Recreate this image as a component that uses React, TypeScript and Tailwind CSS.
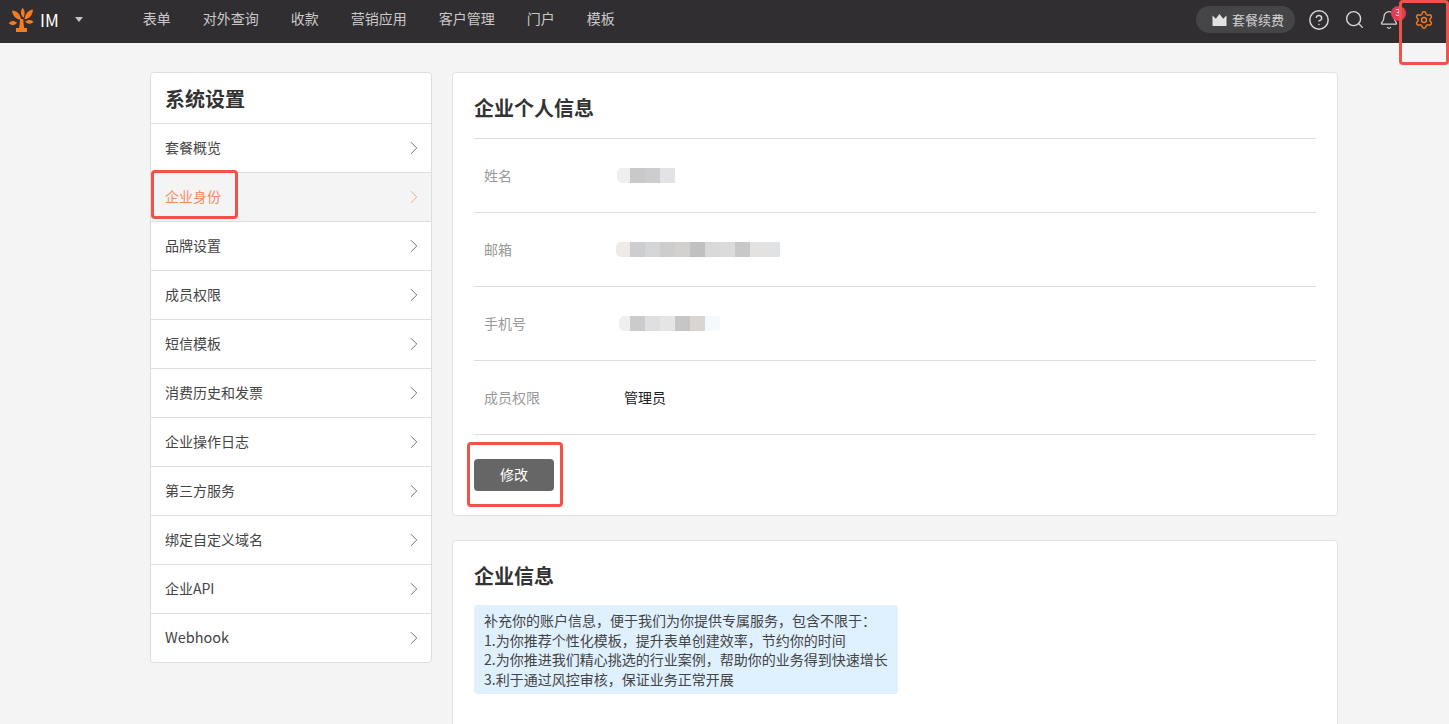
import { Bell, ChevronRight, CircleHelp, Search, Settings } from 'lucide-react';

const NAV = ['表单', '对外查询', '收款', '营销应用', '客户管理', '门户', '模板'];
const MENU = ['套餐概览', '企业身份', '品牌设置', '成员权限', '短信模板', '消费历史和发票', '企业操作日志', '第三方服务', '绑定自定义域名', '企业API', 'Webhook'];

function Logo() {
  return (
    <svg width="26" height="26" viewBox="0 0 26 26" fill="#f47b20">
      <path d="M14.500.800c2.400 2.600 3 6 1 10-2.800-2.400-3.400-6.200-1-10z" />
      <path d="M4 3.500c4.600.2 8 3 9.200 9.200-5-.2-8.400-3.400-9.200-9.200z" />
      <path d="M25 2.500c-4.600.6-7.600 3.600-8.600 9.800 5.200-.6 8.200-4.200 8.600-9.800z" />
      <path d="M.800 16.300c2-2.600 5.200-3 8.200-.6-2.200 2.900-5.400 3.200-8.200.6z" />
      <path d="M25.500 14.800c-2.400-2.400-5.400-2.400-8.400-.2 2.400 2.900 5.800 3 8.400.2z" />
      <path d="M12 12h3.200l.5 6 .6 3H19v4H8v-4h3l.6-3z" />
    </svg>
  );
}

function Crown() {
  return (
    <svg width="15" height="12" viewBox="0 0 15 12" fill="#e2e2e2">
      <path d="M.500 1.500l3.300 3.200L7.500 0l3.700 4.700 3.300-3.200V12H.500z" />
    </svg>
  );
}

// first cell is cut short on the left, the rest sit on a 15px grid
function Blur({ first, cells }: { first: number; cells: string[] }) {
  return (
    <div className="flex h-[15px]">
      {cells.map((c, i) => (
        <div
          key={i}
          className={i === 0 ? 'h-full rounded-l-[5px]' : 'h-full'}
          style={{ background: c, width: i === 0 ? first : 15 }}
        />
      ))}
    </div>
  );
}

function Row({ label, children }: { label: string; children: React.ReactNode }) {
  return (
    <div className="flex h-[74px] items-center border-b border-[#dedede] pl-2.5">
      <div className="w-[132px] pb-0.5 text-sm text-[#999]">{label}</div>
      {children}
    </div>
  );
}

export default function App() {
  return (
    <div className="relative h-[724px] overflow-hidden bg-[#f4f4f4] font-['Noto_Sans_CJK_SC','Noto_Sans',sans-serif] text-[#333]">
      <header className="flex h-[43px] items-center bg-[#302e31] pb-1">
        <div className="ml-2"><Logo /></div>
        <span className="ml-[6px] text-[17px] text-white">IM</span>
        <span className="ml-4 h-0 w-0 border-x-4 border-t-[5px] border-x-transparent border-t-[#c4c4c4]" />
        <nav className="ml-[60px] flex gap-8 pb-1">
          {NAV.map((n) => (
            <span key={n} className="text-sm text-[#c9c9c9]">{n}</span>
          ))}
        </nav>
        <div className="ml-auto flex h-[27px] w-[99px] items-center gap-[5px] rounded-full bg-[#454447] pl-4">
          <Crown />
          <span className="text-[13px] text-[#d2d2d2]">套餐续费</span>
        </div>
        <div className="ml-[6.500px] flex h-5 w-[35px] items-center justify-center">
          <CircleHelp className="text-[#d6d6d6]" size={22} strokeWidth={1.6} />
        </div>
        <div className="flex h-5 w-[35px] items-center justify-center">
          <Search className="text-[#d6d6d6]" size={21} strokeWidth={1.6} />
        </div>
        <div className="relative flex h-5 w-[35px] items-center justify-center">
          <Bell className="text-[#d6d6d6]" size={20} strokeWidth={1.5} />
          <span className="absolute left-[19px] -top-1 flex h-[15px] w-[15px] items-center justify-center rounded-full bg-[#e23b55] text-[9px] text-white">3</span>
        </div>
        <div className="mr-[7.500px] flex h-5 w-[35px] items-center justify-center">
          <Settings className="text-[#f47b20]" size={20} strokeWidth={1.7} />
        </div>
      </header>

      <div className="ml-[150px] mt-[29px] flex w-[1188px] items-start gap-5">
        <aside className="w-[282px] shrink-0 rounded border border-[#dedede] bg-white">
          <div className="flex h-[50px] items-center pl-[14px] pt-0.5 text-xl font-bold">系统设置</div>
          {MENU.map((m) => {
            const active = m === '企业身份';
            return (
              <div key={m} className={active
                ? 'flex h-[49px] items-center justify-between border-t border-[#dedede] bg-[#f4f4f4] pl-[14px] pr-[6px] text-sm text-[#f98a5f]'
                : 'flex h-[49px] items-center justify-between border-t border-[#dedede] pl-[14px] pr-[6px] text-sm text-[#444]'}>
                <span className={m === 'Webhook' ? 'pb-0.5 text-[14.500px]' : 'pb-0.5'}>{m}</span>
                <ChevronRight className={active ? 'opacity-80' : 'text-[#666]'} size={22} strokeWidth={1} />
              </div>
            );
          })}
        </aside>

        <main className="flex min-w-0 flex-1 flex-col gap-6">
          <section className="h-[444px] rounded border border-[#e2e2e2] bg-white px-[21px]">
            <h2 className="flex h-[66px] items-center border-b border-[#dedede] pt-1 text-xl font-bold">企业个人信息</h2>
            <Row label="姓名">
              <div className="ml-px"><Blur first={13} cells={['#efefef', '#c9c9c9', '#cdcdcf', '#e3e3e5']} /></div>
            </Row>
            <Row label="邮箱">
              <Blur first={14} cells={['#eeeae8', '#cdcdcf', '#d4d5d7', '#cdcdcd', '#d3d0cf', '#c0c0c0', '#d9d9d9', '#dbdbdb', '#c8c8c8', '#e3e2e1', '#e0e2e4']} />
            </Row>
            <Row label="手机号">
              <div className="ml-[3px]"><Blur first={11} cells={['#efefef', '#cbcbcb', '#dfdfe1', '#e5e5e5', '#c6c6c6', '#d8d5d2', '#f5f9fc']} /></div>
            </Row>
            <Row label="成员权限">
              <span className="ml-2 pb-0.5 text-sm text-[#222]">管理员</span>
            </Row>
            <button className="mt-6 h-8 w-20 rounded bg-[#666] pb-0.5 text-sm text-white">修改</button>
          </section>

          <section className="h-[300px] rounded border border-[#e2e2e2] bg-white px-[21px]">
            <h2 className="flex h-[64px] items-center pt-1.5 text-xl font-bold">企业信息</h2>
            <div className="w-[424px] rounded bg-[#dff0ff] px-2.5 pb-[5px] pt-[6px] text-sm leading-[19.500px] text-[#444]">
              <p>补充你的账户信息，便于我们为你提供专属服务，包含不限于：</p>
              <p>1.为你推荐个性化模板，提升表单创建效率，节约你的时间</p>
              <p className="whitespace-nowrap">2.为你推进我们精心挑选的行业案例，帮助你的业务得到快速增长</p>
              <p>3.利于通过风控审核，保证业务正常开展</p>
            </div>
          </section>
        </main>
      </div>

      <div className="absolute left-[1399px] top-0 h-[65px] w-[50px] rounded-sm border-[3px] border-[#f15346]" />
      <div className="absolute left-[151px] top-[170px] h-[49px] w-[87px] rounded-sm border-[3px] border-[#f15346]" />
      <div className="absolute left-[467px] top-[442px] h-[65px] w-[96px] rounded-sm border-[3px] border-[#f15346]" />
    </div>
  );
}
